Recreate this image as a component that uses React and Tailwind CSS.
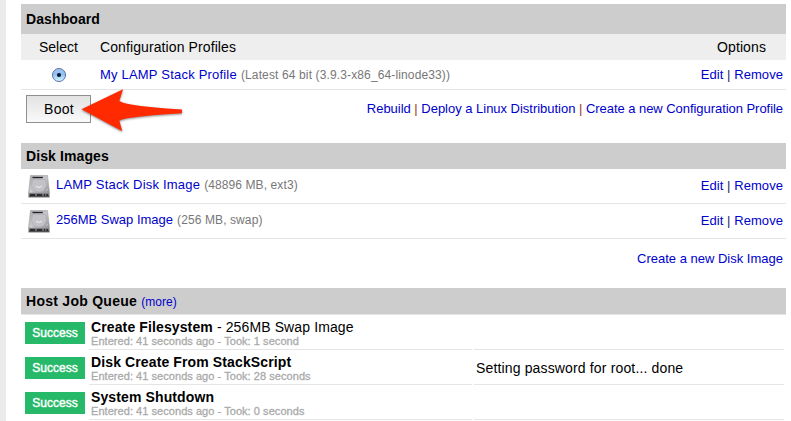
function Link({ children, className = "" }) {
  return <a className={`text-[#0000cc] ${className}`}>{children}</a>;
}

function EditRemove({ className = "" }) {
  return (
    <div className={`ml-auto mr-[3px] text-[13px] tracking-[0.06px] text-[#222266] ${className}`}>
      <Link>Edit</Link> | <Link>Remove</Link>
    </div>
  );
}

function DriveIcon() {
  return (
    <svg width="22" height="23" viewBox="0 0 22 23" className="shrink-0">
      <defs>
        <linearGradient id="metal" x1="0" y1="0" x2="1" y2="1">
          <stop offset="0" stopColor="#a9a9ad" />
          <stop offset="0.5" stopColor="#c6c6ca" />
          <stop offset="1" stopColor="#929296" />
        </linearGradient>
        <linearGradient id="front" x1="0" y1="0" x2="0" y2="1">
          <stop offset="0" stopColor="#88888b" />
          <stop offset="1" stopColor="#4a4a4d" />
        </linearGradient>
      </defs>
      <path d="M2.5 0.5h17l2 17.5H0.5z" fill="url(#metal)" stroke="#a0a0a4" strokeWidth="0.6" />
      <path d="M4.5 4.5l-1 6 2.5 5q5 3 10 0l2.5-5-1-6z" fill="#c3c3c7" stroke="#ababaf" strokeWidth="0.6" />
      <path d="M4.5 2.5h10.3" stroke="#202022" strokeWidth="1.3" />
      <path d="M8 11.2q3 2.5 6 0" fill="none" stroke="#f0f0f2" strokeWidth="1" />
      <path d="M2.5 15.5l1 1M18.5 15.5l1-1" stroke="#ececee" />
      <path d="M0.5 18h21v4.2h-21z" fill="url(#front)" />
      <path d="M2 20h5M9 20h5M16 20h1M18.5 20h1.5" stroke="#19191b" strokeWidth="1.3" />
      <path d="M0.5 22.5h21" stroke="#a9a9a9" strokeWidth="0.6" />
    </svg>
  );
}

function Radio() {
  return (
    <svg width="16" height="16" viewBox="0 0 16 16">
      <defs>
        <linearGradient id="radio" x1="0" y1="0" x2="0" y2="1">
          <stop offset="0" stopColor="#a3c6ed" />
          <stop offset="0.45" stopColor="#8fc1f3" />
          <stop offset="1" stopColor="#d6fbff" />
        </linearGradient>
      </defs>
      <circle cx="8" cy="8" r="6.5" fill="url(#radio)" stroke="#5c6fa5" />
      <circle cx="8" cy="8" r="2.1" fill="#0b1730" />
    </svg>
  );
}

function Arrow() {
  return (
    <svg width="110" height="50" viewBox="0 0 110 50" className="absolute left-[54px] top-[-5px] drop-shadow-[0_1px_1px_rgba(0,0,0,0.45)]">
      <path
        d="M6.5 24.3L48 4.3L44.3 16Q48 18 56 19.5Q74 22.5 107 24.6V28.2Q74 30 56 32.8Q48 34 44.3 35.5L47.3 46.3z"
        fill="#ff2a00"
      />
    </svg>
  );
}

const disks = [
  { name: "LAMP Stack Disk Image", detail: "(48896 MB, ext3)", nameTrack: "tracking-[0.2px]" },
  { name: "256MB Swap Image", detail: "(256 MB, swap)", nameTrack: "tracking-normal" },
];

const jobs = [
  { name: "Create Filesystem", suffix: " - 256MB Swap Image", took: "1 second", output: "" },
  { name: "Disk Create From StackScript", suffix: "", took: "28 seconds", output: "Setting password for root... done" },
  { name: "System Shutdown", suffix: "", took: "0 seconds", output: "" },
];

export default function App() {
  return (
    <div className="flex h-[421px] w-[791px] overflow-hidden bg-white font-['Liberation_Sans',Arial,sans-serif] text-black">
      <div className="w-[6px] shrink-0 bg-[#ebebeb]" />
      <main className="ml-[15px] flex w-[765px] shrink-0 flex-col whitespace-nowrap pt-1">
        <h2 className="h-[30px] bg-[#cdcdcd] pl-[5px] text-[14px] font-bold leading-[31px] tracking-[0.1px]">Dashboard</h2>
        <div className="flex h-[26px] bg-[#eeeeee] text-[14px] leading-[27px]">
          <span className="w-[79px] pl-[18px]">Select</span>
          <span className="tracking-[0.1px]">Configuration Profiles</span>
          <span className="ml-auto mr-5 tracking-[0.1px]">Options</span>
        </div>
        <div className="flex h-[30px] items-center border-b border-[#e5e5e5]">
          <span className="w-[79px] pl-[30px]"><Radio /></span>
          <Link className="text-[13px] tracking-[0.2px]">My LAMP Stack Profile</Link>
          <span className="ml-1 text-[12px] tracking-[0.13px] text-[#777777]">(Latest 64 bit (3.9.3-x86_64-linode33))</span>
          <EditRemove />
        </div>
        <div className="relative flex h-[53px] pt-[5px]">
          <button className="ml-[5px] h-[28px] w-[65px] border border-[#8f8f8f] bg-linear-to-b from-[#e2e2e2] to-[#fafafa] pl-px text-[14px] tracking-[0.3px]">Boot</button>
          <Arrow />
          <div className="ml-auto mr-[3px] text-[13px] leading-[28px] tracking-[-0.02px] text-[#993322]">
            <Link>Rebuild</Link> | <Link>Deploy a Linux Distribution</Link> | <Link className="tracking-[-0.05px]">Create a new Configuration Profile</Link>
          </div>
        </div>
        <h2 className="h-[26px] bg-[#cdcdcd] pl-[5px] text-[14px] font-bold leading-[27px] tracking-[0.1px]">Disk Images</h2>
        {disks.map((d) => (
          <div key={d.name} className="flex h-[35px] items-center border-b border-[#e5e5e5] pl-[7px]">
            <DriveIcon />
            <Link className={`mb-[2px] ml-[6px] text-[13px] ${d.nameTrack}`}>{d.name}</Link>
            <span className="mb-[3px] ml-1 text-[12px] tracking-[0.1px] text-[#777777]">{d.detail}</span>
            <EditRemove />
          </div>
        ))}
        <div className="mr-[3px] h-[49px] text-right text-[13px] leading-[40px]">
          <Link>Create a new Disk Image</Link>
        </div>
        <h2 className="h-[27px] border-b border-[#e5e5e5] bg-[#cdcdcd] pl-[5px] text-[14px] font-bold leading-[27px] tracking-[0.27px]">
          Host Job Queue <Link className="text-[12px] font-normal tracking-normal">(more)</Link>
        </h2>
        {jobs.map((j) => (
          <div key={j.name} className="flex h-[35px] shrink-0">
            <div className="mt-[7px] ml-1 h-[22px] w-[60px] bg-[#26b969] text-center text-[12px] leading-[22px] text-white [-webkit-text-stroke:0.4px_white]">Success</div>
            <div className="ml-1 w-[383px] border-b border-[#e5e5e5] pl-[2px]">
              <div className="pt-[4px] text-[14px] leading-[17px] tracking-[0.12px]">
                <b>{j.name}</b>{j.suffix}
              </div>
              <div className="text-[11px] leading-[11px] tracking-[0.05px] text-[#aaaaaa] [-webkit-text-stroke:0.3px_#aaaaaa]">Entered: 41 seconds ago - Took: {j.took}</div>
            </div>
            <div className="ml-[2px] w-[310px] border-b border-[#e5e5e5] pl-[2px] text-[14px] leading-[36px] tracking-[0.15px]">{j.output}</div>
          </div>
        ))}
      </main>
    </div>
  );
}
